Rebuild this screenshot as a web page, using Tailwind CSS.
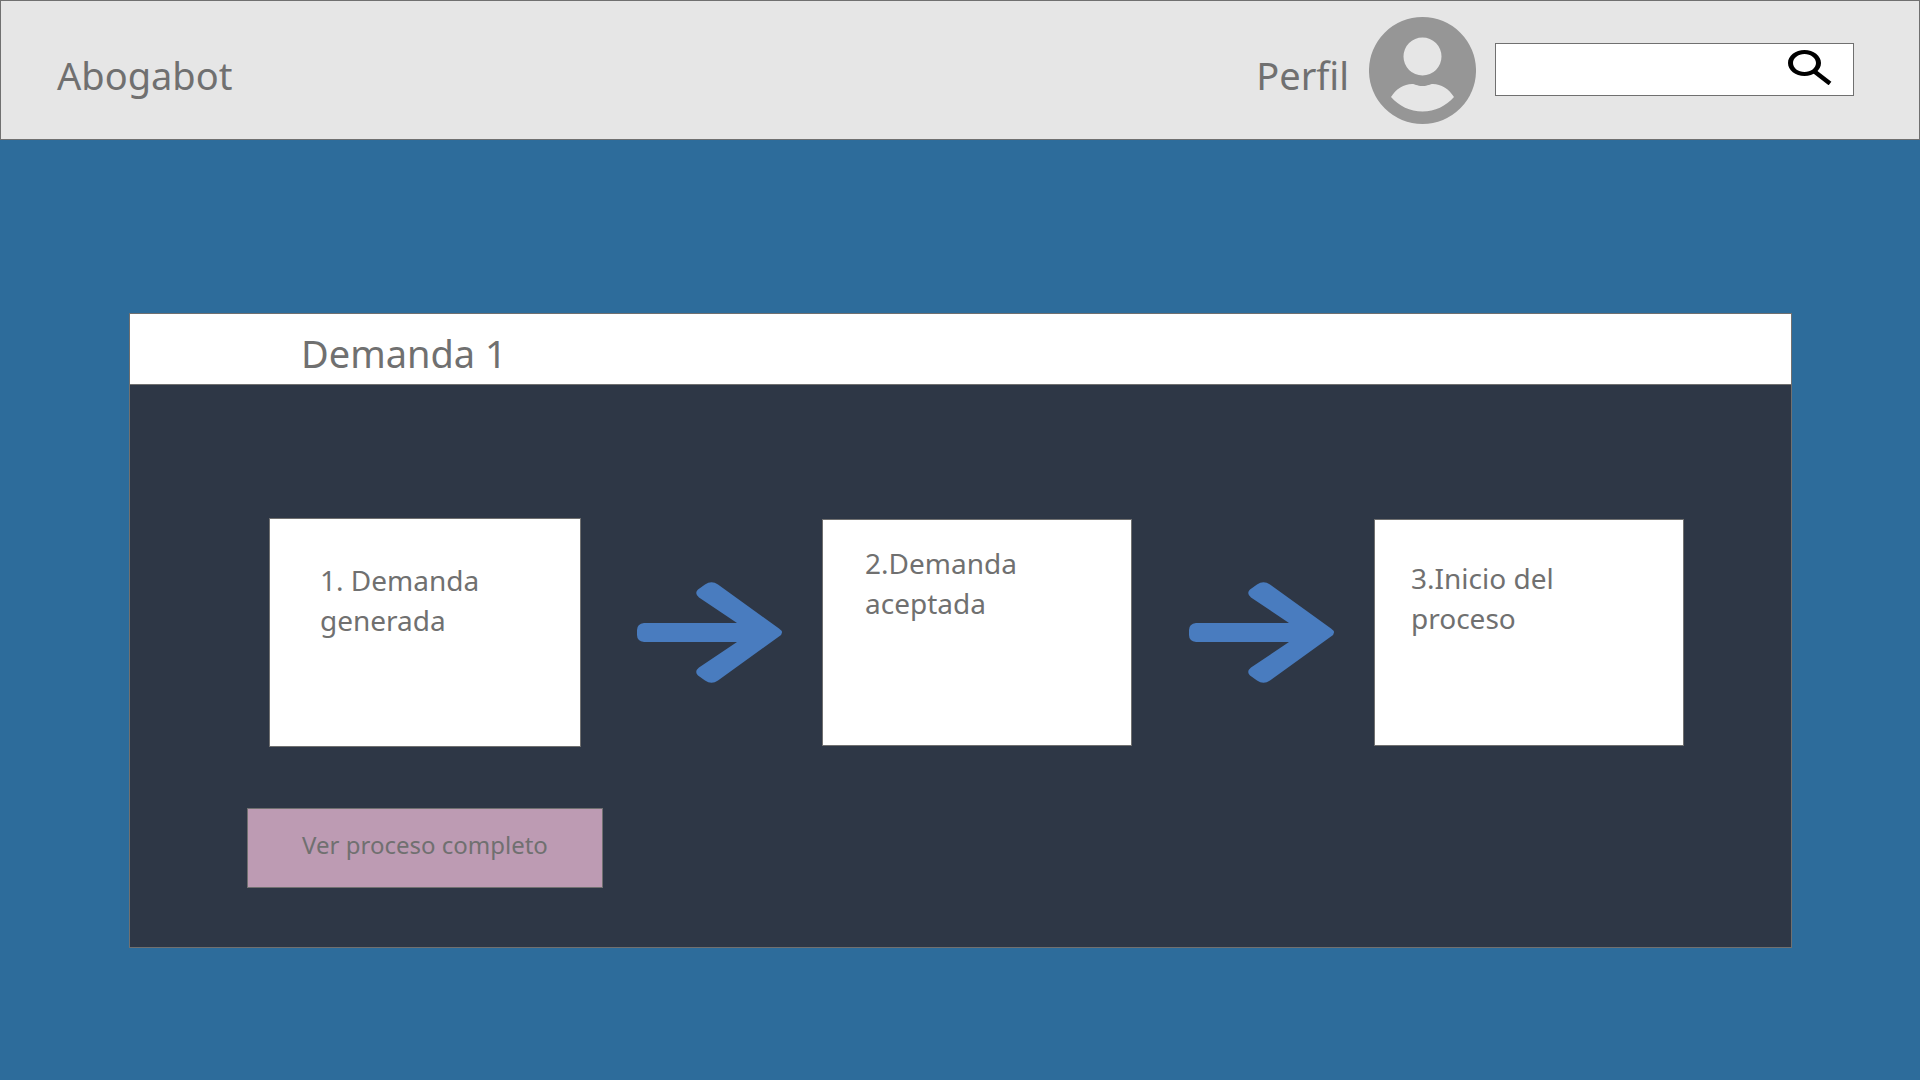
<!DOCTYPE html>
<html lang="es">
<head>
<meta charset="utf-8">
<meta name="viewport" content="width=device-width, initial-scale=1">
<title>Abogabot</title>
<script src="https://cdn.jsdelivr.net/npm/@tailwindcss/browser@4"></script>
</head>
<body class="min-h-screen bg-[#2d6c9b] font-['Noto_Sans',sans-serif] text-[#707070]">
<header class="flex h-[140px] items-start border border-[#707070] bg-[#e6e6e6] pr-[65px] pl-14">
  <a href="#" class="mt-12 text-[38px] leading-[52px]">Abogabot</a>
  <a href="#" class="ml-auto flex items-start gap-5">
    <span class="mt-12 text-[38px] leading-[52px]">Perfil</span>
    <svg class="mt-4 size-[107px]" viewBox="0 0 107 107" aria-hidden="true">
      <path fill="#969696" fill-rule="evenodd" d="M53.5 0a53.5 53.5 0 1 1 0 107a53.5 53.5 0 1 1 0-107ZM53.5 20.5a19 19 0 1 0 0 38a19 19 0 1 0 0-38ZM22 80C27 72 35 67 43 67C46 67 48 69 53.5 69C59 69 61 67 64 67C72 67 80 72 85 80C77 89 66 94.500 53.500 94.500C41 94.500 30 89 22 80Z"/>
    </svg>
  </a>
  <form class="relative mt-[42px] ml-[19px]" role="search">
    <input type="search" aria-label="Buscar" class="block h-[53px] w-[359px] border border-[#707070] bg-white pr-20 pl-4 text-2xl outline-none">
    <button type="submit" aria-label="Buscar" class="absolute top-[7px] right-[22px]">
      <svg class="h-[35px] w-11" viewBox="0 0 44 35" fill="none" stroke="#000" aria-hidden="true">
        <path fill="#000" stroke="none" fill-rule="evenodd" d="M16.500 0C25.600 0 33 5.800 33 13S25.600 26 16.500 26S0 20.200 0 13S7.400 0 16.500 0ZM16.500 4C10.200 4 5 8 5 13S10.200 22 16.500 22S28 18 28 13S22.800 4 16.500 4Z"/>
        <path stroke-width="4.500" d="M26.500 21.500L42 33.500"/>
      </svg>
    </button>
  </form>
</header>
<main class="pt-[173px] pr-32 pb-[132px] pl-[129px]">
  <section class="border border-[#707070] bg-[#2e3746]">
    <h1 class="h-[71px] border-b border-[#707070] bg-white pt-[13px] pl-[171px] text-[38px] leading-[52px]">Demanda 1</h1>
    <div class="grid grid-cols-[312fr_241fr_310fr_242fr_310fr] items-center pt-[133px] pr-[107px] pl-[139px]">
      <article class="h-[229px] border border-[#707070] bg-white pt-[41px] pl-[50px] text-[28px] leading-10">1. Demanda<br>generada</article>
      <svg class="mr-10 h-[101px] w-[145px] justify-self-end" viewBox="0 0 145 101" fill="#497cbf" aria-hidden="true">
        <path d="M7 41H100L62 15.500Q57 11.500 61 7.500L68 2.500Q74.500-2 81 2.500L142 46.500Q148 50.500 142 54.500L81 98.500Q74.500 103 68 98.500L61 93.500Q57 89.500 62 85.500L100 60H7Q0 59 0 53V48Q0 42 7 41Z"/>
      </svg>
      <article class="h-[227px] border border-[#707070] bg-white pt-[23px] pl-[42px] text-[28px] leading-10">2.Demanda<br>aceptada</article>
      <svg class="mr-10 h-[101px] w-[145px] justify-self-end" viewBox="0 0 145 101" fill="#497cbf" aria-hidden="true">
        <path d="M7 41H100L62 15.500Q57 11.500 61 7.500L68 2.500Q74.500-2 81 2.500L142 46.500Q148 50.500 142 54.500L81 98.500Q74.500 103 68 98.500L61 93.500Q57 89.500 62 85.500L100 60H7Q0 59 0 53V48Q0 42 7 41Z"/>
      </svg>
      <article class="h-[227px] border border-[#707070] bg-white pt-[38px] pl-9 text-[28px] leading-10">3.Inicio del<br>proceso</article>
    </div>
    <button type="button" class="mt-[61px] mb-[59px] ml-[117px] block h-20 w-[356px] border border-[#707070] bg-[#bd9bb3] pb-[6px] text-2xl">Ver proceso completo</button>
  </section>
</main>
</body>
</html>
